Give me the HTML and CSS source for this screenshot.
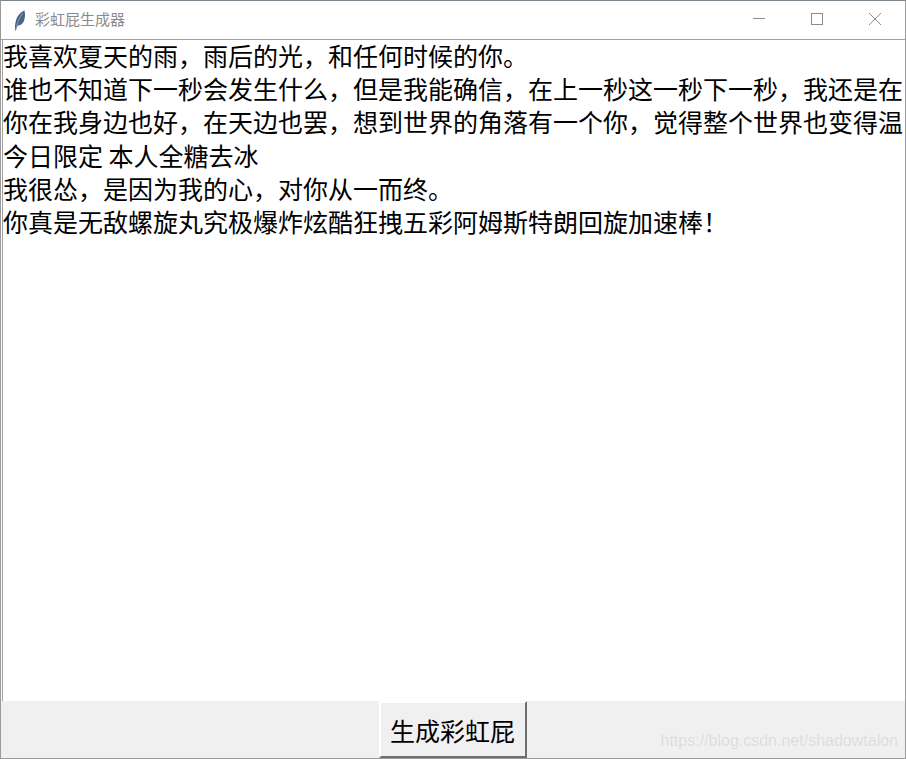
FILE: index.html
```html
<!DOCTYPE html>
<html lang="zh">
<head>
<meta charset="utf-8">
<title>彩虹屁生成器</title>
<link rel="stylesheet" href="styles.css">
</head>
<body>
<div class="window">
  <header class="titlebar">
    <svg class="feather" width="12" height="21" viewBox="0 0 12 21"><path d="M1 20.500 C0.800 17 1 14 2 10.500 C3 6.500 6 2.500 10.500 0.500 C11.500 5 11 9 9.500 12 C8 14.500 6 15.500 4 15.500 C3 17 2.300 19 2 20.500 Z" fill="#4a6387"/><path d="M1.500 20.500 C3 14 5 8 9 3" stroke="#a9b5c6" stroke-width="0.700" fill="none"/></svg>
    <span class="title">彩虹屁生成器</span>
    <div class="controls">
      <svg class="ctl" width="58" height="38" viewBox="0 0 58 38"><path d="M23 17.500H35" stroke="#8c8c8c"/></svg>
      <svg class="ctl" width="58" height="38" viewBox="0 0 58 38"><rect x="23.500" y="12.500" width="11" height="11" fill="none" stroke="#8c8c8c"/></svg>
      <svg class="ctl" width="58" height="38" viewBox="0 0 58 38"><path d="M23 12L35 24M35 12L23 24" stroke="#8c8c8c"/></svg>
    </div>
  </header>
  <main class="textbox">
    <div class="line">我喜欢夏天的雨，雨后的光，和任何时候的你。</div>
    <div class="line">谁也不知道下一秒会发生什么，但是我能确信，在上一秒这一秒下一秒，我还是在</div>
    <div class="line">你在我身边也好，在天边也罢，想到世界的角落有一个你，觉得整个世界也变得温</div>
    <div class="line">今日限定 本人全糖去冰</div>
    <div class="line">我很怂，是因为我的心，对你从一而终。</div>
    <div class="line">你真是无敌螺旋丸究极爆炸炫酷狂拽五彩阿姆斯特朗回旋加速棒！</div>
  </main>
  <footer class="bottom">
    <button class="gen">生成彩虹屁</button>
    <span class="mark">https://blog.csdn.net/shadowtalon</span>
  </footer>
</div>
</body>
</html>
```

FILE: styles.css
```css
html, body {
  margin: 0;
  padding: 0;
  height: 100%;
  overflow: hidden;
  background: #fff;
}
.window {
  box-sizing: border-box;
  width: 906px;
  height: 759px;
  display: flex;
  flex-direction: column;
  border: 1px solid #9a9a9a;
  border-top-color: #7d8790;
  font-family: "Noto Sans CJK SC", sans-serif;
}
.titlebar {
  flex: 0 0 38px;
  display: flex;
  align-items: center;
  background: #fff;
  border-bottom: 1px solid #a0a0a0;
}
.feather {
  margin-left: 13px;
}
.title {
  margin-left: 9px;
  margin-bottom: 3px;
  font-size: 15px;
  color: #8a8a8a;
}
.controls {
  margin-left: auto;
  display: flex;
  margin-right: 1px;
}
.textbox {
  flex: 1;
  min-height: 0;
  border-left: 1px solid #a0a0a0;
  margin-left: 1px;
  background: #fff;
  color: #000;
  font-size: 25px;
  font-weight: 400;
  white-space: nowrap;
}
.line {
  height: 33.200px;
  line-height: 31.200px;
}
.bottom {
  flex: 0 0 57px;
  display: flex;
  justify-content: center;
  background: #f0f0f0;
  position: relative;
}
.gen {
  width: 148px;
  height: 57px;
  padding: 0;
  margin-left: -1px;
  background: #f0f0f0;
  border: 2px solid;
  border-color: #fff #6f6f6f #6f6f6f #fff;
  font-family: inherit;
  font-size: 25px;
  font-weight: 400;
  color: #000;
}
.mark {
  position: absolute;
  right: 7px;
  bottom: 8px;
  font-family: "Liberation Sans", sans-serif;
  font-size: 16px;
  color: #dcdcdc;
  text-shadow: 0 0 1px #fafafa;
}
```
